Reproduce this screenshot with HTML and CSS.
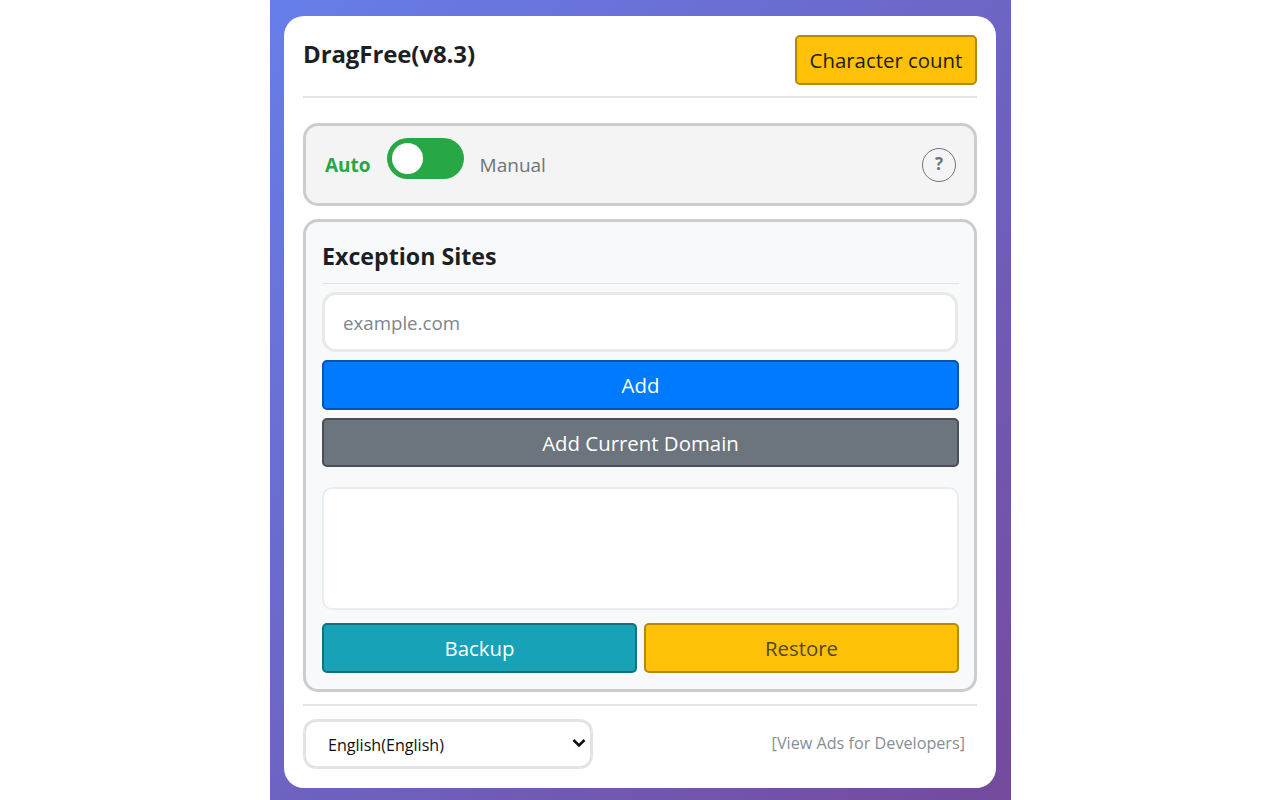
FILE: index.html
```html
<!DOCTYPE html>
<html lang="en">
<head>
<meta charset="utf-8">
<title>DragFree</title>
<link rel="stylesheet" href="styles.css">
</head>
<body>
<main class="stage">
  <div class="card">
    <header class="head">
      <h1 class="title">DragFree(v8.3)</h1>
      <button class="btn btn-warning btn-count">Character count</button>
    </header>
    <section class="panel mode">
      <span class="auto">Auto</span>
      <span class="switch"><span class="knob"></span></span>
      <span class="manual">Manual</span>
      <span class="help">?</span>
    </section>
    <section class="panel sites">
      <h2 class="sites-title">Exception Sites</h2>
      <input class="site-input" type="text" placeholder="example.com">
      <button class="btn btn-primary btn-add">Add</button>
      <button class="btn btn-secondary btn-current">Add Current Domain</button>
      <div class="site-list"></div>
      <div class="pair">
        <button class="btn btn-info">Backup</button>
        <button class="btn btn-warning btn-restore">Restore</button>
      </div>
    </section>
    <footer class="foot">
      <div class="lang-wrap">
        <select class="lang"><option>English(English)</option></select>
        <svg class="chev" width="14" height="10" viewBox="0 0 14 10" aria-hidden="true"><path d="M1.5 2 7 7.5 12.5 2" fill="none" stroke="#111" stroke-width="2.6"/></svg>
      </div>
      <a class="ads" href="#">[View Ads for Developers]</a>
    </footer>
  </div>
</main>
</body>
</html>
```
FILE: styles.css
```css
* { box-sizing: border-box; }
html, body { margin: 0; height: 100%; background: #fff; }
body { font-family: "Open Sans", "Noto Sans", sans-serif; color: #212529; }
.stage {
  width: 741px;
  height: 800px;
  margin-left: 270px;
  padding: 16px 15px 12px 14px;
  background: linear-gradient(135deg, #667eea 0%, #744a9c 100%);
}
.card {
  height: 772px;
  background: #fff;
  border-radius: 20px;
  padding: 19px 19px 0;
}
.head {
  height: 63px;
  display: flex;
  justify-content: space-between;
  align-items: flex-start;
  border-bottom: 2px solid #e6e6e6;
}
.title {
  margin: 5px 0 0;
  font-size: 24px;
  line-height: 28px;
  font-weight: 700;
  letter-spacing: -0.1px;
  color: #1c1f23;
}
.btn {
  display: block;
  border-radius: 5px;
  border: 2px solid;
  font: 400 20.4px/26px "Open Sans", "Noto Sans", sans-serif;
  padding: 0;
  height: 50px;
}
.btn-warning { background: #ffc107; border-color: #b58a08; color: #1c1c14; }
.btn-primary { background: #007bff; border-color: #0056b3; color: #fff; }
.btn-secondary { background: #6c757d; border-color: #494f54; color: #fff; }
.btn-info { background: #17a2b8; border-color: #117180; color: #fff; }
.btn-count { width: 182px; margin-top: 0; }
.btn-restore { color: #4f4a2a; }
.panel {
  border: 3px solid #ccc;
  border-radius: 15px;
}
.mode {
  height: 83px;
  margin-top: 25px;
  background: #f4f4f4;
  display: flex;
  align-items: center;
  padding: 0 18px 0 19px;
}
.auto { color: #28a745; font-weight: 700; font-size: 19px; margin-top: 1px; }
.switch {
  width: 77px;
  height: 41px;
  margin: -13px 0 0 16px;
  border-radius: 21px;
  background: #28a745;
  padding: 5px;
}
.knob { display: block; width: 31px; height: 31px; border-radius: 50%; background: #fff; }
.manual { color: #6c757d; font-size: 19px; margin: 1px 0 0 16px; }
.help {
  margin-left: auto;
  width: 34px;
  height: 34px;
  border: 1.7px solid #6c757d;
  border-radius: 50%;
  color: #6c757d;
  font-weight: 700;
  font-size: 17px;
  line-height: 30px;
  text-align: center;
}
.sites {
  height: 473px;
  margin-top: 13px;
  background: #f8f9fa;
  padding: 16px 15px 0 16px;
}
.sites-title {
  margin: 0 0 8px;
  height: 46px;
  font-size: 23.2px;
  line-height: 36px;
  font-weight: 700;
  color: #1c1f23;
  border-bottom: 1px solid #dee2e6;
}
.site-input {
  display: block;
  width: 636px;
  height: 60px;
  border: 3px solid #e9e9e9;
  border-radius: 14px;
  padding: 0 18px;
  background: #fff;
  font: 400 18.7px "Open Sans", "Noto Sans", sans-serif;
}
.site-input::placeholder { color: #7d858c; opacity: 1; }
.btn-add { width: 100%; margin-top: 8px; }
.btn-current { width: 100%; margin-top: 8px; height: 49px; }
.site-list {
  height: 123px;
  margin-top: 20px;
  background: #fff;
  border: 2px solid #e9ecef;
  border-radius: 10px;
}
.pair {
  display: flex;
  gap: 7px;
  margin-top: 13px;
}
.pair .btn { flex: 1; }
.foot {
  margin-top: 12px;
  border-top: 2px solid #e6e6e6;
  padding: 13px 12px 0 0;
  display: flex;
  justify-content: space-between;
  align-items: center;
}
.lang-wrap { position: relative; display: block; width: 290px; height: 50px; }
.lang {
  display: block;
  width: 290px;
  height: 50px;
  appearance: none;
  border: 3px solid #e3e3e3;
  border-radius: 13px;
  background: #fff;
  color: #111;
  padding: 2px 22px 0;
  font: 400 16.1px "Open Sans", "Noto Sans", sans-serif;
}
.chev { position: absolute; right: 7px; top: 19px; }
.ads { color: #868e96; font-size: 16.2px; text-decoration: none; margin-top: -2px; }
```
